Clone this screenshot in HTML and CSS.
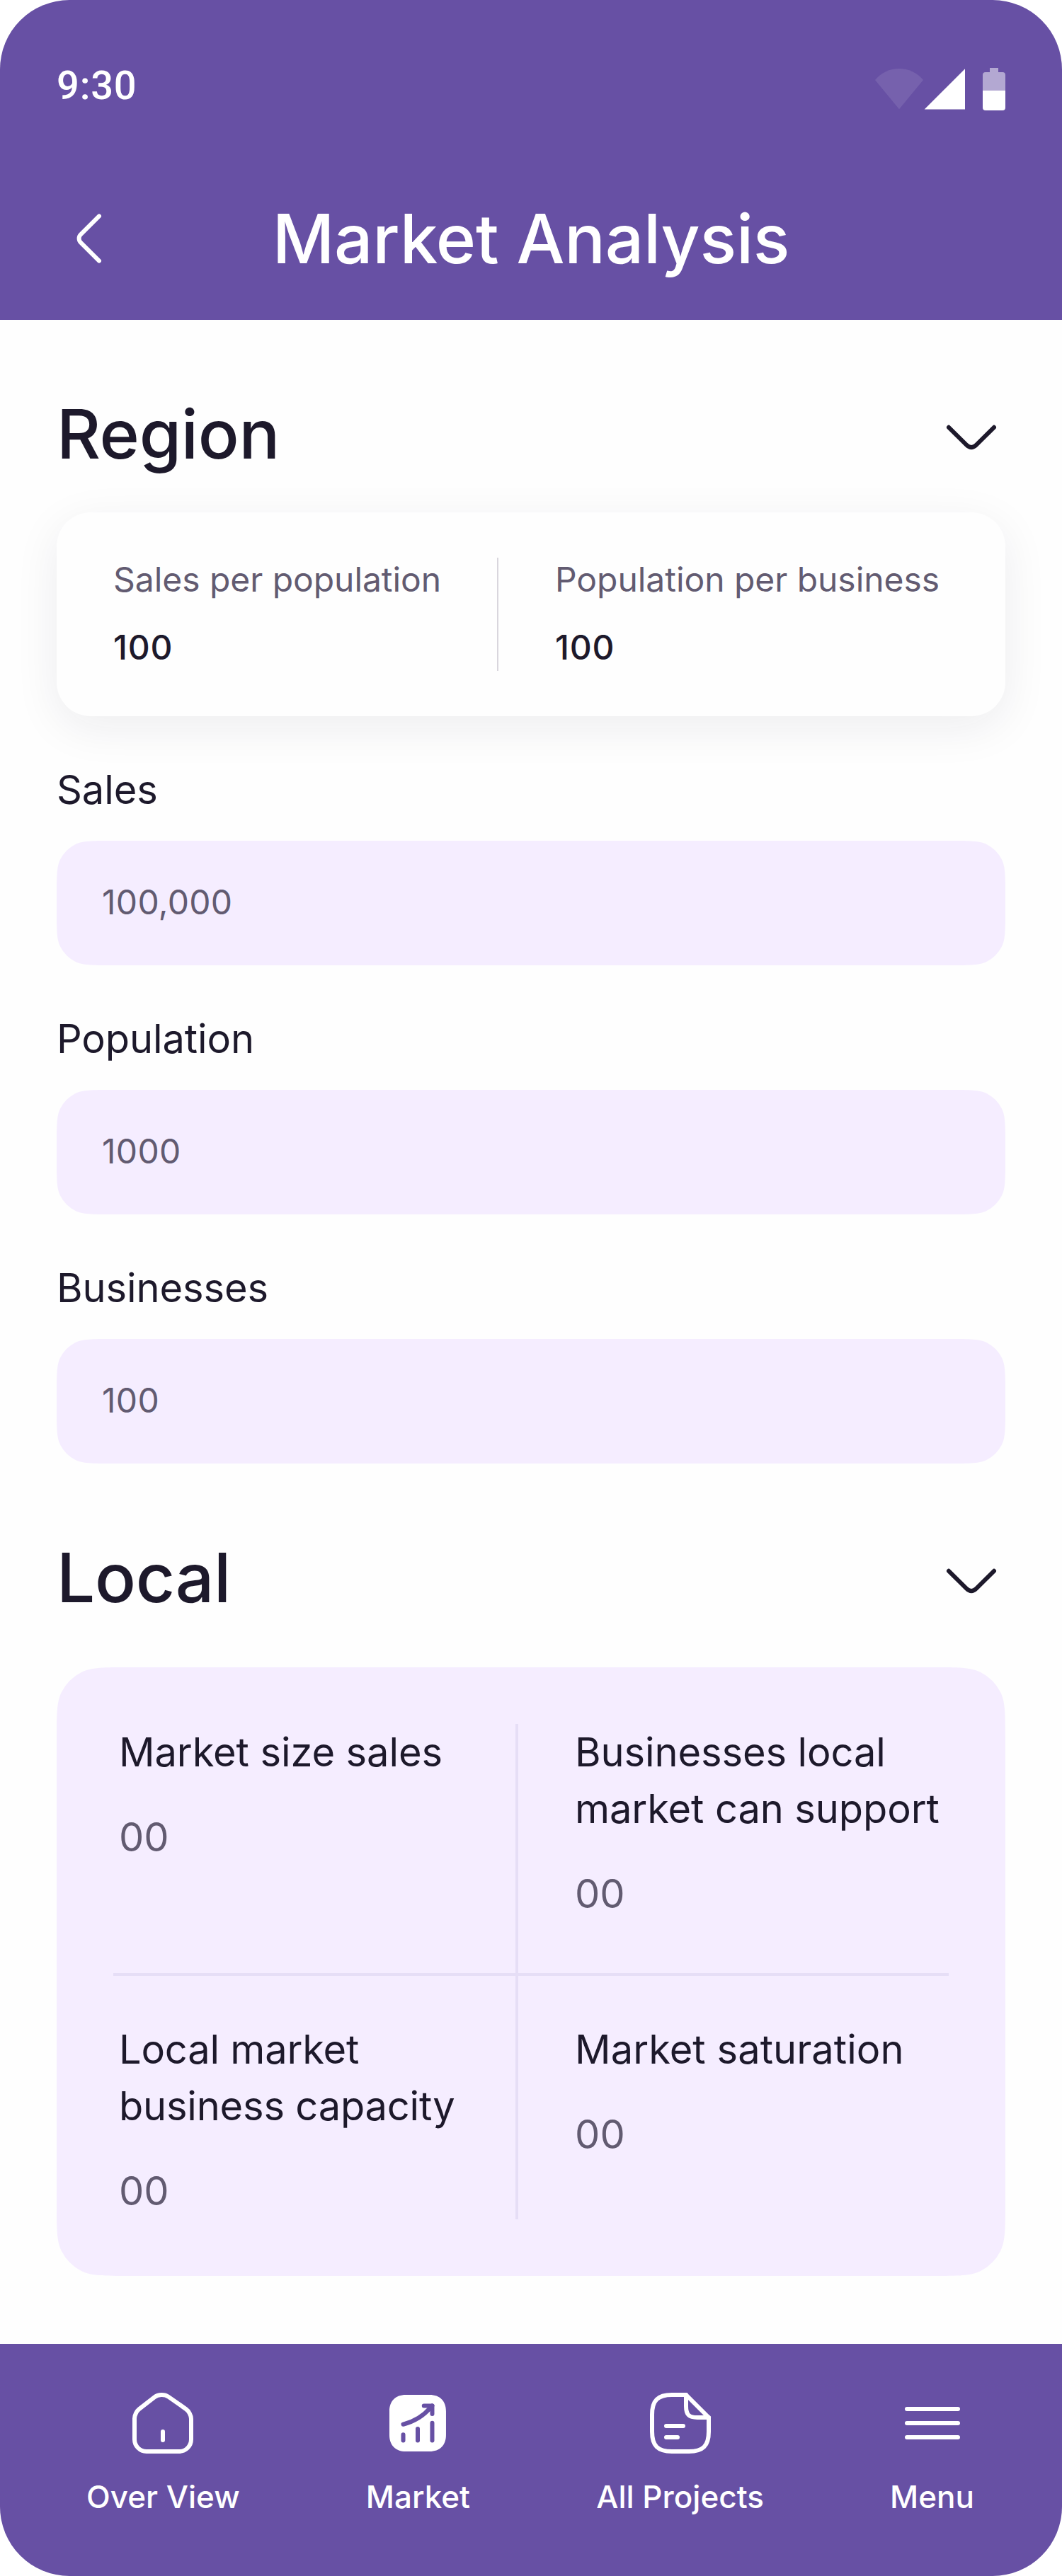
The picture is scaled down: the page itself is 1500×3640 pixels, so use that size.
FILE: index.html
```html
<!DOCTYPE html>
<html lang="en">
<head>
<meta charset="utf-8">
<title>Market Analysis</title>
<link rel="stylesheet" href="styles.css">
</head>
<body>
<div class="screen">
  <header class="header">
    <div class="status-bar">
      <span class="clock">9:30</span>
      <svg class="status-icons" viewBox="0 0 184 60" fill="#fff">
        <path opacity=".1" d="M34 58.3 0 17A44 44 0 0 1 68 17Z"/>
        <path d="M69.7 58.4 127 1.2V58.4Z"/>
        <path opacity=".5" d="M162 0h12v6h6a4 4 0 0 1 4 4v22h-32V10a4 4 0 0 1 4-4h6Z"/>
        <path d="M152 32h32v24a4 4 0 0 1-4 4h-24a4 4 0 0 1-4-4Z"/>
      </svg>
    </div>
    <div class="title-row">
      <button class="icon-button" aria-label="Back">
        <svg class="icon" viewBox="0 0 24 24"><path d="M15 19.92 8.48 13.4c-.77-.77-.77-2.03 0-2.8L15 4.08"/></svg>
      </button>
      <h1 class="title">Market Analysis</h1>
    </div>
  </header>

  <main class="content">
    <section class="region">
      <div class="section-head">
        <h2 class="heading">Region</h2>
        <svg class="icon icon-chevron" viewBox="0 0 96 96"><path d="M16 35.8 41 60.7Q48 67.6 55 60.7L80 35.8"/></svg>
      </div>
      <div class="summary">
        <div class="stat">
          <span class="stat-label">Sales per population</span>
          <span class="stat-value">100</span>
        </div>
        <div class="stat stat-divided">
          <span class="stat-label">Population per business</span>
          <span class="stat-value">100</span>
        </div>
      </div>
      <div class="field">
        <span class="field-label">Sales</span>
        <div class="field-box">100,000</div>
      </div>
      <div class="field">
        <span class="field-label">Population</span>
        <div class="field-box">1000</div>
      </div>
      <div class="field">
        <span class="field-label">Businesses</span>
        <div class="field-box">100</div>
      </div>
    </section>

    <section class="local">
      <div class="section-head">
        <h2 class="heading">Local</h2>
        <svg class="icon icon-chevron" viewBox="0 0 96 96"><path d="M16 35.8 41 60.7Q48 67.6 55 60.7L80 35.8"/></svg>
      </div>
      <div class="metrics">
        <div class="rule rule-vertical"></div>
        <div class="rule rule-horizontal"></div>
        <div class="metric metric-nw"><span>Market size sales</span><span class="metric-value">00</span></div>
        <div class="metric metric-ne"><span>Businesses local<br>market can support</span><span class="metric-value">00</span></div>
        <div class="metric metric-sw"><span>Local market<br>business capacity</span><span class="metric-value">00</span></div>
        <div class="metric metric-se"><span>Market saturation</span><span class="metric-value">00</span></div>
      </div>
    </section>
  </main>

  <nav class="tabs">
    <a class="tab">
      <svg class="icon" viewBox="0 0 24 24"><path d="M9.02 2.84 3.63 7.04C2.73 7.74 2 9.23 2 10.36v7.41c0 2.32 1.89 4.22 4.21 4.22h11.58c2.32 0 4.21-1.9 4.21-4.21V10.5c0-1.21-.81-2.76-1.8-3.45l-6.18-4.33c-1.4-.98-3.65-.93-5 .12ZM12 17.99v-3"/></svg>
      <span>Over View</span>
    </a>
    <a class="tab">
      <svg class="icon" viewBox="0 0 24 24"><path class="tab-plate" d="M16.19 2H7.81C4.17 2 2 4.17 2 7.81v8.37C2 19.83 4.17 22 7.81 22h8.37c3.64 0 5.81-2.17 5.81-5.81V7.81C22 4.17 19.83 2 16.19 2Z"/><path class="tab-cut" d="M6.88 18.15v-2.07M12 18.15v-4.14M17.12 18.15v-6.22M17.12 5.85l-.46.54a18.9 18.9 0 0 1-9.78 6.04"/><path class="tab-cut" d="M14.19 5.85h2.93v2.92"/></svg>
      <span>Market</span>
    </a>
    <a class="tab">
      <svg class="icon" viewBox="0 0 24 24"><path d="M22 10v5c0 5-2 7-7 7H9c-5 0-7-2-7-7V9c0-5 2-7 7-7h5"/><path d="M22 10h-4c-3 0-4-1-4-4V2l8 8ZM7 13h6M7 17h4"/></svg>
      <span>All Projects</span>
    </a>
    <a class="tab">
      <svg class="icon" viewBox="0 0 24 24"><path d="M3 7h18M3 12h18M3 17h18"/></svg>
      <span>Menu</span>
    </a>
  </nav>
</div>
</body>
</html>
```
FILE: styles.css
```css
:root {
  --primary: #6750a4;
  --ink: #1d192b;
  --muted: #625b71;
  --tint: #f5edff;
  --rule: #e6def6;
}

* { box-sizing: border-box; }

body {
  margin: 0;
  background: #fff;
  color: var(--ink);
  font-family: Inter, "Liberation Sans", sans-serif;
}

.screen {
  display: flex;
  flex-direction: column;
  width: 1500px;
  height: 3640px;
  overflow: hidden;
  border-radius: 98px;
  background: #fefefe;
}

.icon {
  display: block;
  flex: none;
  width: 96px;
  height: 96px;
  fill: none;
  stroke: currentColor;
  stroke-width: 1.5;
  stroke-linecap: round;
  stroke-linejoin: round;
}

.icon-chevron { stroke-width: 6; }

/* Header */
.header {
  height: 452px;
  flex: none;
  background: var(--primary);
  color: #fff;
}

.status-bar {
  display: flex;
  justify-content: space-between;
  align-items: flex-start;
  height: 208px;
  padding: 81px 80px 0 80px;
}

.clock {
  font: 500 56px/80px Roboto, sans-serif;
  letter-spacing: .8px;
}

.status-icons {
  width: 184px;
  height: 60px;
  margin-top: 15px;
}

.title-row {
  display: grid;
  grid-template-columns: 96px 1fr 96px;
  padding: 80px 80px 0;
}

.icon-button {
  padding: 0;
  border: 0;
  background: none;
  color: inherit;
}

.title {
  margin: 0;
  text-align: center;
  font-size: 96px;
  font-weight: 500;
  line-height: 98px;
  letter-spacing: -.3px;
}

/* Sections */
.content {
  flex: 1;
  padding: 116px 80px 0;
}

.section-head {
  display: flex;
  justify-content: space-between;
  align-items: flex-start;
}

.heading {
  margin: 0;
  font-size: 96px;
  font-weight: 500;
  line-height: 90px;
  letter-spacing: -.3px;
}

.summary {
  display: flex;
  height: 288px;
  margin-top: 60px;
  padding: 64px 80px;
  border-radius: 48px;
  background: #fefefe;
  box-shadow: 0 16px 64px rgba(25, 28, 60, .075);
  font-size: 48px;
  line-height: 62px;
  white-space: nowrap;
}

.stat {
  display: flex;
  flex-direction: column;
  gap: 34px;
  width: 542px;
}

.stat-divided {
  width: auto;
  padding-left: 80px;
  border-left: 2px solid #d9d6dd;
}

.stat-label {
  color: var(--muted);
  letter-spacing: -.05px;
}

.stat-value {
  font-weight: 500;
  letter-spacing: .8px;
}

.field {
  display: flex;
  flex-direction: column;
  gap: 32px;
  margin-top: 64px;
}

.field-label {
  font-size: 56px;
  line-height: 80px;
  letter-spacing: -.1px;
}

/* Smoothed 48px corners */
.field-box {
  display: flex;
  align-items: center;
  height: 176px;
  padding: 0 64px 2px;
  background: var(--tint);
  color: var(--muted);
  font-size: 48px;
  line-height: 58px;
  letter-spacing: .3px;
  clip-path: path("M76.8 0H1263.2c26.88 0 40.32 0 50.59 5.23a48 48 0 0 1 20.98 20.98c5.23 10.27 5.23 23.71 5.23 50.59V99.2c0 26.88 0 40.32-5.23 50.59a48 48 0 0 1-20.98 20.98c-10.27 5.23-23.71 5.23-50.59 5.23H76.8c-26.88 0-40.32 0-50.59-5.23a48 48 0 0 1-20.98-20.98c-5.23-10.27-5.23-23.71-5.23-50.59V76.8c0-26.88 0-40.32 5.23-50.59a48 48 0 0 1 20.98-20.98c10.27-5.23 23.71-5.23 50.59-5.23Z");
}

.local { margin-top: 116px; }

/* Smoothed 64px corners */
.metrics {
  display: grid;
  grid-template-columns: 568px 4px 608px;
  grid-template-rows: 352px 4px 344px;
  height: 860px;
  margin-top: 76px;
  padding: 80px;
  background: var(--tint);
  font-size: 56px;
  line-height: 80px;
  letter-spacing: -.1px;
  white-space: nowrap;
  clip-path: path("M102.4 0H1237.6c35.84 0 53.76 0 67.45 6.98a64 64 0 0 1 27.97 27.97c6.98 13.69 6.98 31.61 6.98 67.45V757.6c0 35.84 0 53.76-6.98 67.45a64 64 0 0 1-27.97 27.97c-13.69 6.98-31.61 6.98-67.45 6.98H102.4c-35.84 0-53.76 0-67.45-6.98a64 64 0 0 1-27.97-27.97c-6.98-13.69-6.98-31.61-6.98-67.45V102.4c0-35.84 0-53.76 6.98-67.45a64 64 0 0 1 27.97-27.97c13.69-6.98 31.61-6.98 67.45-6.98Z");
}

.rule { background: var(--rule); }
.rule-vertical { grid-area: 1 / 2 / 4 / 3; }
.rule-horizontal { grid-area: 2 / 1 / 3 / 4; }

.metric {
  display: flex;
  flex-direction: column;
  gap: 40px;
}

.metric-nw { grid-area: 1 / 1; padding-left: 8px; }
.metric-ne { grid-area: 1 / 3; padding-left: 80px; }
.metric-sw { grid-area: 3 / 1; padding: 64px 0 0 8px; }
.metric-se { grid-area: 3 / 3; padding: 64px 0 0 80px; }

.metric-sw { letter-spacing: -.2px; }
.metric-se { letter-spacing: .05px; }

.metric-value { color: var(--muted); }

/* Tab bar */
.tabs {
  display: flex;
  flex: none;
  justify-content: space-between;
  align-items: flex-start;
  height: 328px;
  padding: 64px 124px 0 122px;
  background: var(--primary);
  color: #fff;
}

.tab {
  display: flex;
  flex-direction: column;
  align-items: center;
  gap: 24px;
  font-size: 44px;
  font-weight: 500;
  line-height: 64px;
}

.tab-plate { fill: #fff; stroke: none; }
.tab-cut { stroke: var(--primary); }
```
